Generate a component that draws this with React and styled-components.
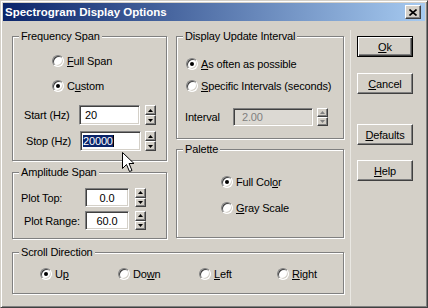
import React from 'react'
import styled, { createGlobalStyle, css } from 'styled-components'

const GlobalStyle = createGlobalStyle`
  html, body {
    margin: 0;
    padding: 0;
    background: #d4d0c8;
  }
  body {
    font-family: "Liberation Sans", Arial, sans-serif;
    font-size: 11px;
    letter-spacing: -0.15px;
    color: #000;
  }
`

const raised = css`
  border: 1px solid;
  border-color: #fff #404040 #404040 #fff;
  box-shadow: inset -1px -1px 0 #808080, inset 1px 1px 0 #d4d0c8;
`

const sunken = css`
  border: 1px solid;
  border-color: #808080 #fff #fff #808080;
  box-shadow: inset 1px 1px 0 #404040, inset -1px -1px 0 #d4d0c8;
`

const Window = styled.div`
  position: relative;
  box-sizing: border-box;
  width: 428px;
  height: 308px;
  padding: 2px;
  background: #d4d0c8;
  border: 1px solid;
  border-color: #d4d0c8 #404040 #404040 #d4d0c8;
  box-shadow: inset 1px 1px 0 #fff, inset -1px -1px 0 #808080;
  display: flex;
  flex-direction: column;
  overflow: hidden;
`

const TitleBar = styled.div`
  height: 18px;
  flex: none;
  display: flex;
  align-items: center;
  justify-content: space-between;
  padding: 0 4px 0 2px;
  background: linear-gradient(to right, #0a246a, #a6caf0);
  color: #fff;
  font-weight: bold;
  font-size: 11.5px;
  letter-spacing: 0;
`

const CloseButton = styled.div`
  box-sizing: border-box;
  width: 16px;
  height: 14px;
  background: #d4d0c8;
  border: 1px solid;
  border-color: #fff #404040 #404040 #fff;
  box-shadow: inset -1px -1px 0 #808080;
  display: flex;
  align-items: center;
  justify-content: center;
`

const Body = styled.div`
  flex: 1;
  display: flex;
  padding: 9px 0 0 9px;
`

const Groups = styled.div`
  width: 332px;
  display: flex;
  flex-direction: column;
`

const GroupRow = styled.div`
  display: flex;
  gap: 9px;
`

const Column = styled.div`
  width: ${p => p.$w}px;
  display: flex;
  flex-direction: column;
  gap: ${p => p.$gap}px;
`

const Group = styled.fieldset`
  box-sizing: border-box;
  margin: ${p => p.$mt || 0}px 0 0 0;
  padding: 0;
  min-width: 0;
  height: ${p => p.$h}px;
  border: 1px solid #808080;
  box-shadow: inset 1px 1px 0 #fff, 1px 1px 0 #fff;
  display: flex;
  flex-direction: column;
`

const Legend = styled.legend`
  margin-left: 6px;
  padding: 0 2px;
  line-height: 13px;
  background: #d4d0c8;
`

const RadioRow = styled.div`
  display: flex;
  align-items: center;
  gap: 3px;
  height: 16px;
`

const RadioCircle = styled.span`
  box-sizing: border-box;
  flex: none;
  width: 12px;
  height: 12px;
  border-radius: 50%;
  background: #fff;
  ${sunken};
  display: flex;
  align-items: center;
  justify-content: center;
  &::after {
    content: '';
    width: 4px;
    height: 4px;
    border-radius: 50%;
    background: #000;
    display: ${p => (p.$checked ? 'block' : 'none')};
  }
`

const RadioGrid = styled.div`
  display: grid;
  grid-template-columns: 78px 81px 78px auto;
  margin-top: ${p => p.$mt}px;
  padding-left: 27px;
`

const FieldRow = styled.div`
  display: flex;
  align-items: center;
  height: ${p => p.$h}px;
  margin-top: ${p => p.$mt}px;
  padding-left: ${p => p.$pl}px;
`

const FieldLabel = styled.span`
  width: ${p => p.$w}px;
  flex: none;
`

const Edit = styled.div`
  box-sizing: border-box;
  width: ${p => p.$w}px;
  height: 100%;
  ${sunken};
  background: ${p => (p.$disabled ? '#dcd9d3' : '#fff')};
  color: ${p => (p.$disabled ? '#808080' : '#000')};
  display: flex;
  align-items: center;
  justify-content: ${p => (p.$center ? 'center' : 'flex-start')};
  padding: 0 ${p => (p.$pad === undefined ? 4 : p.$pad)}px;
  margin-right: ${p => p.$gap}px;
  overflow: hidden;
  white-space: nowrap;
`

const Selected = styled.span`
  background: #0a246a;
  color: #fff;
  border-right: 1px solid #000;
`

const Spinner = styled.div`
  width: 11px;
  height: 100%;
  display: flex;
  flex-direction: column;
`

const SpinButton = styled.div`
  box-sizing: border-box;
  flex: 1;
  background: #d4d0c8;
  ${raised};
  display: flex;
  align-items: center;
  justify-content: center;
`

const Separator = styled.div`
  width: 1px;
  margin-left: 6px;
  background: #e9e7e2;
`

const ButtonColumn = styled.div`
  display: flex;
  flex-direction: column;
  margin-left: 6px;
  padding-top: 6px;
`

const Button = styled.div`
  box-sizing: border-box;
  width: 56px;
  height: 21px;
  margin-top: ${p => p.$mt || 0}px;
  background: #d4d0c8;
  display: flex;
  align-items: center;
  justify-content: center;
  ${p =>
    p.$default
      ? css`
          border: 1px solid #000;
          box-shadow: inset 1px 1px 0 #fff, inset -1px -1px 0 #404040, inset -2px -2px 0 #808080;
        `
      : raised};
`

const Cursor = styled.svg`
  position: absolute;
  left: 121px;
  top: 151px;
`

function Arrow({ up, disabled }) {
  return (
    <svg width="5" height="3" viewBox="0 0 5 3">
      <path
        d={up ? 'M2.5 0 L5 3 L0 3 Z' : 'M0 0 L5 0 L2.5 3 Z'}
        fill={disabled ? '#808080' : '#000'}
      />
    </svg>
  )
}

function Spin({ disabled }) {
  return (
    <Spinner>
      <SpinButton><Arrow up disabled={disabled} /></SpinButton>
      <SpinButton><Arrow disabled={disabled} /></SpinButton>
    </Spinner>
  )
}

function Radio({ checked, children }) {
  return (
    <RadioRow>
      <RadioCircle $checked={checked} />
      <span>{children}</span>
    </RadioRow>
  )
}

function App() {
  return (
    <>
      <GlobalStyle />
      <Window>
        <TitleBar>
          <span>Spectrogram Display Options</span>
          <CloseButton>
            <svg width="8" height="7" viewBox="0 0 8 7">
              <path d="M0.5 0.5 L7.5 6.5 M7.5 0.5 L0.5 6.5" stroke="#000" strokeWidth="1.6" />
            </svg>
          </CloseButton>
        </TitleBar>
        <Body>
          <Groups>
            <GroupRow>
              <Column $w={155} $gap={5}>
                <Group $h={131}>
                  <Legend>Frequency Span</Legend>
                  <FieldRow $h={16} $mt={10} $pl={39}>
                    <Radio><u>F</u>ull Span</Radio>
                  </FieldRow>
                  <FieldRow $h={16} $mt={9} $pl={39}>
                    <Radio checked>C<u>u</u>stom</Radio>
                  </FieldRow>
                  <FieldRow $h={20} $mt={11} $pl={11}>
                    <FieldLabel $w={55}>Start (Hz)</FieldLabel>
                    <Edit $w={61} $gap={5} $pad={5}>20</Edit>
                    <Spin />
                  </FieldRow>
                  <FieldRow $h={20} $mt={6} $pl={13}>
                    <FieldLabel $w={54}>Stop (Hz)</FieldLabel>
                    <Edit $w={61} $gap={4} $pad={2}><Selected>20000</Selected></Edit>
                    <Spin />
                  </FieldRow>
                </Group>
                <Group $h={73}>
                  <Legend>Amplitude Span</Legend>
                  <FieldRow $h={19} $mt={9} $pl={8}>
                    <FieldLabel $w={64}>Plot Top:</FieldLabel>
                    <Edit $w={44} $gap={6} $center>0.0</Edit>
                    <Spin />
                  </FieldRow>
                  <FieldRow $h={19} $mt={4} $pl={11}>
                    <FieldLabel $w={61}>Plot Range:</FieldLabel>
                    <Edit $w={44} $gap={6} $center>60.0</Edit>
                    <Spin />
                  </FieldRow>
                </Group>
              </Column>
              <Column $w={168} $gap={4}>
                <Group $h={109}>
                  <Legend>Display Update Interval</Legend>
                  <FieldRow $h={16} $mt={13} $pl={9}>
                    <Radio checked><u>A</u>s often as possible</Radio>
                  </FieldRow>
                  <FieldRow $h={16} $mt={6} $pl={9}>
                    <Radio><u>S</u>pecific Intervals (seconds)</Radio>
                  </FieldRow>
                  <FieldRow $h={18} $mt={14} $pl={8}>
                    <FieldLabel $w={48}>Interval</FieldLabel>
                    <Edit $w={80} $gap={4} $pad={8} $disabled>2.00</Edit>
                    <Spin disabled />
                  </FieldRow>
                </Group>
                <Group $h={95}>
                  <Legend>Palette</Legend>
                  <FieldRow $h={16} $mt={18} $pl={44}>
                    <Radio checked>Full Col<u>o</u>r</Radio>
                  </FieldRow>
                  <FieldRow $h={16} $mt={10} $pl={44}>
                    <Radio><u>G</u>ray Scale</Radio>
                  </FieldRow>
                </Group>
              </Column>
            </GroupRow>
            <Group $h={48} $mt={7}>
              <Legend>Scroll Direction</Legend>
              <RadioGrid $mt={7}>
                <Radio checked>U<u>p</u></Radio>
                <Radio>Do<u>w</u>n</Radio>
                <Radio><u>L</u>eft</Radio>
                <Radio><u>R</u>ight</Radio>
              </RadioGrid>
            </Group>
          </Groups>
          <Separator />
          <ButtonColumn>
            <Button $default><span><u>O</u>k</span></Button>
            <Button $mt={16}><span><u>C</u>ancel</span></Button>
            <Button $mt={30}><span><u>D</u>efaults</span></Button>
            <Button $mt={15}><span><u>H</u>elp</span></Button>
          </ButtonColumn>
        </Body>
        <Cursor width="13" height="21" viewBox="0 0 13 21">
          <path d="M0.5 0.5 L0.5 16.5 L4.5 12.5 L7.5 19.5 L10 18.5 L7 11.5 L12 11.5 Z" fill="#fff" stroke="#000" strokeWidth="1" />
        </Cursor>
      </Window>
    </>
  )
}

export default App
